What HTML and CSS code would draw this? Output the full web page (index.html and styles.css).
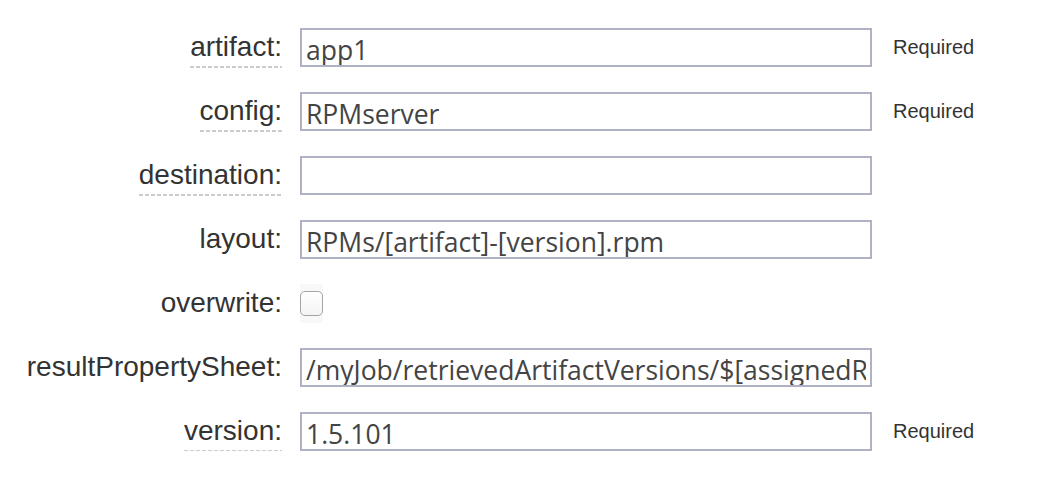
FILE: index.html
```html
<!DOCTYPE html>
<html>
<head>
<meta charset="utf-8">
<link rel="stylesheet" href="styles.css">
</head>
<body>
<form class="form">
  <label class="label"><span class="name hint">artifact:</span></label>
  <input class="field" type="text" value="app1">
  <span class="req">Required</span>

  <label class="label"><span class="name hint">config:</span></label>
  <input class="field" type="text" value="RPMserver">
  <span class="req">Required</span>

  <label class="label"><span class="name hint">destination:</span></label>
  <input class="field" type="text" value="">
  <span class="req"></span>

  <label class="label"><span class="name">layout:</span></label>
  <input class="field" type="text" value="RPMs/[artifact]-[version].rpm">
  <span class="req"></span>

  <label class="label"><span class="name">overwrite:</span></label>
  <div class="checkcell"><span class="checkwrap"><span class="check"></span></span></div>
  <span class="req"></span>

  <label class="label"><span class="name">resultPropertySheet:</span></label>
  <input class="field" type="text" value="/myJob/retrievedArtifactVersions/$[assignedResourceName]">
  <span class="req"></span>

  <label class="label"><span class="name hint">version:</span></label>
  <input class="field" type="text" value="1.5.101">
  <span class="req">Required</span>
</form>
</body>
</html>
```
FILE: styles.css
```css
html, body {
  margin: 0;
  padding: 0;
  background: #ffffff;
}
.form {
  display: grid;
  grid-template-columns: 282px 572px auto;
  grid-auto-rows: 39px;
  row-gap: 25px;
  column-gap: 18px;
  padding-top: 28px;
  font-family: "Liberation Sans", Arial, sans-serif;
}
.label {
  justify-self: end;
  align-self: start;
  padding-top: 5px;
  font-size: 28px;
  line-height: 28px;
  color: #333333;
}
.name {
  display: inline-block;
  padding-bottom: 7px;
}
.hint {
  background-image: repeating-linear-gradient(to right, #cccccc 0 4px, transparent 4px 6px);
  background-repeat: no-repeat;
  background-position: left bottom;
  background-size: 100% 2px;
}
.field {
  box-sizing: border-box;
  width: 572px;
  height: 39px;
  margin: 0;
  padding: 4px 4px 0 4px;
  border: 2px solid #aeb2c4;
  border-radius: 0;
  font-family: "Open Sans", sans-serif;
  font-size: 26.5px;
  color: #444444;
  background: #ffffff;
  outline: none;
}
.req {
  margin-left: 3px;
  align-self: center;
  font-size: 20px;
  color: #333333;
}
.checkcell {
  display: flex;
  align-items: stretch;
}
.checkwrap {
  width: 23px;
  display: flex;
  align-items: center;
  background: #f8f8f8;
}
.check {
  box-sizing: border-box;
  width: 23px;
  height: 25px;
  border: 1.5px solid #a4a4a4;
  border-radius: 5px;
  background: linear-gradient(#ffffff, #f4f4f4);
}
```
